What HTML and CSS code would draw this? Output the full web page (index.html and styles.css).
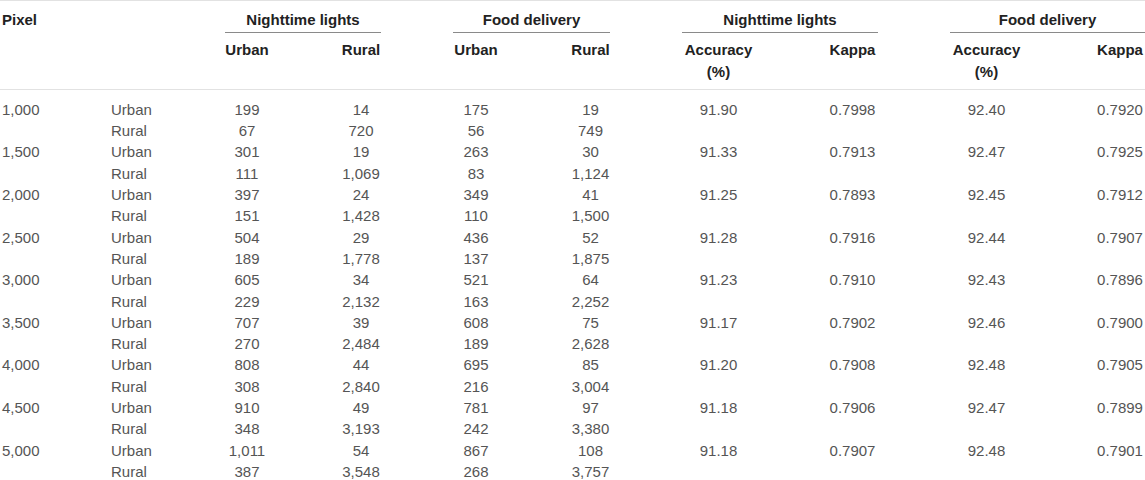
FILE: index.html
```html
<!DOCTYPE html>
<html lang="en">
<head>
<meta charset="UTF-8" />
<meta name="viewport" content="width=device-width, initial-scale=1" />
<title>Classification accuracy by pixel threshold</title>
<link rel="stylesheet" href="styles.css">
</head>
<body>

<table class="acc-table">
  <colgroup>
    <col class="c-pixel">
    <col class="c-type">
    <col class="c-nu">
    <col class="c-nr">
    <col class="c-fu">
    <col class="c-fr">
    <col class="c-na">
    <col class="c-nk">
    <col class="c-fa">
    <col class="c-fk">
  </colgroup>
  <thead>
    <tr>
      <th rowspan="2" class="left first">Pixel</th>
      <th rowspan="2" class="left"></th>
      <th colspan="2"><span class="grp">Nighttime lights</span></th>
      <th colspan="2"><span class="grp">Food delivery</span></th>
      <th colspan="2"><span class="grp">Nighttime lights</span></th>
      <th colspan="2" class="last"><span class="grp">Food delivery</span></th>
    </tr>
    <tr class="sub">
      <th>Urban</th>
      <th>Rural</th>
      <th>Urban</th>
      <th>Rural</th>
      <th>Accuracy (%)</th>
      <th>Kappa</th>
      <th>Accuracy (%)</th>
      <th class="last">Kappa</th>
    </tr>
  </thead>
  <tbody>
    <tr><td class="left first">1,000</td><td class="left">Urban</td><td>199</td><td>14</td><td>175</td><td>19</td><td>91.90</td><td>0.7998</td><td>92.40</td><td class="last">0.7920</td></tr>
    <tr><td class="left first"></td><td class="left">Rural</td><td>67</td><td>720</td><td>56</td><td>749</td><td></td><td></td><td></td><td class="last"></td></tr>
    <tr><td class="left first">1,500</td><td class="left">Urban</td><td>301</td><td>19</td><td>263</td><td>30</td><td>91.33</td><td>0.7913</td><td>92.47</td><td class="last">0.7925</td></tr>
    <tr><td class="left first"></td><td class="left">Rural</td><td>111</td><td>1,069</td><td>83</td><td>1,124</td><td></td><td></td><td></td><td class="last"></td></tr>
    <tr><td class="left first">2,000</td><td class="left">Urban</td><td>397</td><td>24</td><td>349</td><td>41</td><td>91.25</td><td>0.7893</td><td>92.45</td><td class="last">0.7912</td></tr>
    <tr><td class="left first"></td><td class="left">Rural</td><td>151</td><td>1,428</td><td>110</td><td>1,500</td><td></td><td></td><td></td><td class="last"></td></tr>
    <tr><td class="left first">2,500</td><td class="left">Urban</td><td>504</td><td>29</td><td>436</td><td>52</td><td>91.28</td><td>0.7916</td><td>92.44</td><td class="last">0.7907</td></tr>
    <tr><td class="left first"></td><td class="left">Rural</td><td>189</td><td>1,778</td><td>137</td><td>1,875</td><td></td><td></td><td></td><td class="last"></td></tr>
    <tr><td class="left first">3,000</td><td class="left">Urban</td><td>605</td><td>34</td><td>521</td><td>64</td><td>91.23</td><td>0.7910</td><td>92.43</td><td class="last">0.7896</td></tr>
    <tr><td class="left first"></td><td class="left">Rural</td><td>229</td><td>2,132</td><td>163</td><td>2,252</td><td></td><td></td><td></td><td class="last"></td></tr>
    <tr><td class="left first">3,500</td><td class="left">Urban</td><td>707</td><td>39</td><td>608</td><td>75</td><td>91.17</td><td>0.7902</td><td>92.46</td><td class="last">0.7900</td></tr>
    <tr><td class="left first"></td><td class="left">Rural</td><td>270</td><td>2,484</td><td>189</td><td>2,628</td><td></td><td></td><td></td><td class="last"></td></tr>
    <tr><td class="left first">4,000</td><td class="left">Urban</td><td>808</td><td>44</td><td>695</td><td>85</td><td>91.20</td><td>0.7908</td><td>92.48</td><td class="last">0.7905</td></tr>
    <tr><td class="left first"></td><td class="left">Rural</td><td>308</td><td>2,840</td><td>216</td><td>3,004</td><td></td><td></td><td></td><td class="last"></td></tr>
    <tr><td class="left first">4,500</td><td class="left">Urban</td><td>910</td><td>49</td><td>781</td><td>97</td><td>91.18</td><td>0.7906</td><td>92.47</td><td class="last">0.7899</td></tr>
    <tr><td class="left first"></td><td class="left">Rural</td><td>348</td><td>3,193</td><td>242</td><td>3,380</td><td></td><td></td><td></td><td class="last"></td></tr>
    <tr><td class="left first">5,000</td><td class="left">Urban</td><td>1,011</td><td>54</td><td>867</td><td>108</td><td>91.18</td><td>0.7907</td><td>92.48</td><td class="last">0.7901</td></tr>
    <tr><td class="left first"></td><td class="left">Rural</td><td>387</td><td>3,548</td><td>268</td><td>3,757</td><td></td><td></td><td></td><td class="last"></td></tr>
  </tbody>
</table>

</body>
</html>
```
FILE: styles.css
```css
body {
  margin: 0;
  background: #fff;
  font-family: 'Liberation Sans', Arial, Helvetica, sans-serif;
  font-size: 15px;
  line-height: 21.3px;
  color: #555;
}
.acc-table {
  width: 1145px;
  table-layout: fixed;
  border-collapse: collapse;
  border-top: 1px solid #e2e2e2;
}
.c-pixel { width: 75px; }
.c-type { width: 114px; }
.c-nu { width: 116px; }
.c-nr { width: 112px; }
.c-fu { width: 118px; }
.c-fr { width: 111px; }
.c-na { width: 145px; }
.c-nk { width: 123px; }
.c-fa { width: 145px; }
.c-fk { width: 86px; }
.acc-table th,
.acc-table td {
  padding: 0 36px;
  text-align: center;
  vertical-align: top;
  white-space: normal;
}
.acc-table th {
  font-weight: bold;
  color: #222;
  padding-top: 8px;
}
.acc-table thead {
  border-bottom: 1px solid #e2e2e2;
}
.acc-table thead th[rowspan] {
  padding-bottom: 7px;
}
.acc-table .sub th {
  padding-top: 6px;
  padding-bottom: 7px;
}
.grp {
  display: block;
  padding-bottom: 2px;
  border-bottom: 1px solid #8a8a8a;
}
.acc-table .left { text-align: left; }
.acc-table .first { padding-left: 2px; }
.acc-table .last { padding-right: 0; }
.acc-table tbody tr:first-child td {
  padding-top: 9px;
}
```
